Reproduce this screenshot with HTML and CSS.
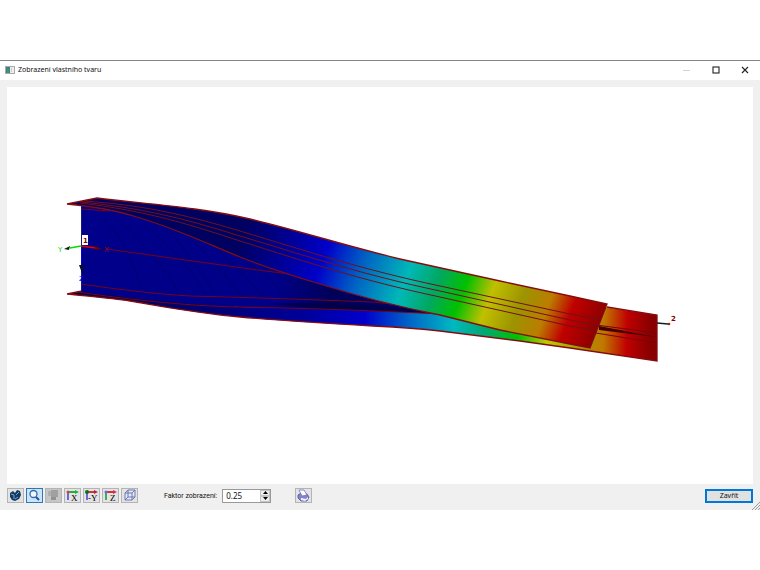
FILE: index.html
```html
<!DOCTYPE html>
<html lang="cs">
<head>
    <meta charset="UTF-8">
    <meta name="viewport" content="width=device-width, initial-scale=1.0">
    <title>Zobrazení vlastního tvaru</title>
    <link rel="stylesheet" href="styles.css">
</head>
<body>
    <div class="window">
        <header class="titlebar">
            <svg class="app-icon" viewBox="0 0 10 8">
                <rect x="0.5" y="0.5" width="9" height="7" fill="#eee" stroke="#aaa"/>
                <rect x="1" y="1" width="4" height="6" fill="#3f7f8c"/>
                <rect x="2" y="3" width="2" height="4" fill="#3c9a6a"/>
                <rect x="6" y="2" width="1" height="4" fill="#ccc"/>
            </svg>
            <h1>Zobrazení vlastního tvaru</h1>
            <div class="caption">
                <button type="button" aria-label="Minimalizovat" disabled><svg viewBox="0 0 8 8"><path d="M0 4.5h7" stroke="#d2d2d2"/></svg></button>
                <button type="button" aria-label="Maximalizovat"><svg viewBox="0 0 8 8"><rect x="1" y="1" width="6" height="6" fill="none" stroke="#222" stroke-width="1.1"/></svg></button>
                <button type="button" aria-label="Zavřít okno"><svg viewBox="0 0 8 8"><path d="M1 1l6 6M7 1L1 7" stroke="#222" stroke-width="1.1"/></svg></button>
            </div>
        </header>

        <main class="content">
            <div class="view">
                <svg class="model" viewBox="7 87 746 397" role="img" aria-label="Vlastní tvar nosníku">
                    <defs>
                        <linearGradient id="top" gradientUnits="userSpaceOnUse" x1="240" y1="237" x2="600" y2="376">
                            <stop offset="0" stop-color="#000060"/>
                            <stop offset="0.12" stop-color="#000094"/>
                            <stop offset="0.22" stop-color="#0000c8"/>
                            <stop offset="0.32" stop-color="#0060c4"/>
                            <stop offset="0.44" stop-color="#00b8b8"/>
                            <stop offset="0.52" stop-color="#00a860"/>
                            <stop offset="0.59" stop-color="#00c000"/>
                            <stop offset="0.66" stop-color="#c0c000"/>
                            <stop offset="0.74" stop-color="#9c9400"/>
                            <stop offset="0.81" stop-color="#bc7c00"/>
                            <stop offset="0.87" stop-color="#c00000"/>
                            <stop offset="0.96" stop-color="#880000"/>
                        </linearGradient>
                        <linearGradient id="bottom" gradientUnits="userSpaceOnUse" x1="67" y1="300" x2="657" y2="320">
                            <stop offset="0" stop-color="#000048"/>
                            <stop offset="0.22" stop-color="#000070"/>
                            <stop offset="0.4" stop-color="#000098"/>
                            <stop offset="0.505" stop-color="#0000cc"/>
                            <stop offset="0.57" stop-color="#0058c8"/>
                            <stop offset="0.655" stop-color="#00b8c0"/>
                            <stop offset="0.71" stop-color="#00a870"/>
                            <stop offset="0.765" stop-color="#00c000"/>
                            <stop offset="0.815" stop-color="#c0c800"/>
                            <stop offset="0.87" stop-color="#a89800"/>
                            <stop offset="0.91" stop-color="#c07800"/>
                            <stop offset="0.95" stop-color="#c00000"/>
                            <stop offset="0.99" stop-color="#880000"/>
                        </linearGradient>
                        <linearGradient id="web">
                            <stop offset="0" stop-color="#00008a"/>
                            <stop offset="0.55" stop-color="#000088"/>
                            <stop offset="0.7" stop-color="#000058"/>
                            <stop offset="1" stop-color="#000078"/>
                        </linearGradient>
                    </defs>

                    <!-- bottom flange and the far end -->
                    <path d="M67 294 L82 291 Q130 293 240 307 L420 309 L560 325 L605 307 L657 315 V361 L570 348 L520 341 C490 337 465 334 440 331 C415 328 395 327 373 326 C320 323 285 321 240 317 C195 313 160 306 130 301 C110 298 85 296 67 294Z" fill="url(#bottom)"/>
                    <!-- web -->
                    <path d="M81 205 L137 215 L183 231 L240 255 L320 283 L387 302 L440 314 C380 310 310 309 240 307 C180 304 120 296 81 292Z" fill="url(#web)"/>
                    <g fill="none" stroke="#000070">
                        <path d="M101 219 Q124 233 141 289"/>
                        <path d="M117 219 Q152 248 178 291"/>
                        <path d="M145 225 Q180 252 205 293"/>
                        <path d="M171 233 Q201 270 215 294"/>
                        <path d="M192 240 Q228 276 242 297"/>
                        <path d="M220 252 Q248 276 263 297"/>
                        <path d="M249 264 Q275 280 284 297"/>
                        <path d="M274 273 Q300 287 311 298"/>
                    </g>
                    <path d="M270 304 Q360 300 440 313 Q350 312 270 304Z" fill="#00004c"/>
                    <g fill="none" stroke="#7c0010">
                        <path d="M107 249 L250 269 L290 274"/>
                        <path d="M81 284 C115 289 155 294 190 296 C270 298 320 300 373 302 L400 305"/>
                        <path d="M77 292 C120 298 180 306 240 307 C300 308 385 311 440 314"/>
                        <path d="M81 209 L110 211"/>
                        <path d="M596 325 L657 333"/>
                        <path d="M596 333 L657 343"/>
                    </g>
                    <path d="M599 326 L656 337 L599 330Z" fill="#420000"/>

                    <!-- top flange -->
                    <path d="M67 204 L97 198 C145 204 200 207 250 219 C300 231 350 247 400 259 C435 267 465 273 500 281 L570 296 L607 304 L590 348 L570 344 L500 330 C480 325 460 320 440 315 C400 307 360 297 320 284 C290 275 265 267 240 257 C210 245 180 230 137 217 C115 210 90 206 67 204Z" fill="url(#top)"/>
                    <g fill="none" stroke="#70101c">
                        <path d="M84 201 C140 205 180 213 240 231 C310 252 360 269 440 286 L570 314 L601 320"/>
                        <path d="M82 202 C140 208 180 217 240 236 C310 257 360 274 440 291 L570 320 L599 326"/>
                        <path d="M80 203 C140 210 180 221 240 241 C310 263 360 280 440 297 L570 326 L597 331"/>
                    </g>
                    <g fill="none" stroke="#840c10" stroke-width="1.3">
                        <path d="M67 204 L97 198 C145 204 200 207 250 219 C300 231 350 247 400 259 C435 267 465 273 500 281 L570 296 L607 304 L590 348 L570 344 L500 330 C480 325 460 320 440 315 C400 307 360 297 320 284 C290 275 265 267 240 257 C210 245 180 230 137 217 C115 210 90 206 67 204Z"/>
                        <path d="M67 294 L82 291 M67 294 C85 296 110 298 130 301 C160 306 195 313 240 317 C285 321 320 323 373 326 C395 327 415 328 440 331 C465 334 490 337 520 341 L570 348 L657 361 V315 L607 307"/>
                    </g>

                    <!-- axes at node 1 -->
                    <path d="M81.500 206 V292" stroke="#181878"/>
                    <path d="M81.500 247 V268" stroke="#0000e0"/>
                    <path d="M79 265 h5 l-2 8z" fill="#061026"/>
                    <path d="M81 246 L70 248" stroke="#00e000" stroke-width="1.5"/>
                    <path d="M64 249 L70 246 L69 250Z" fill="#062c06"/>
                    <path d="M81 246 L96 248" stroke="#e80000" stroke-width="1.5"/>
                    <path d="M95 246 L102 249 L95 250Z" fill="#700000"/>
                    <rect x="82" y="235" width="6" height="10" fill="#fff"/>
                    <g class="marks">
                        <text x="83" y="243" fill="#800000">1</text>
                        <text x="58" y="252" class="axis" fill="#00e000">Y</text>
                        <text x="104" y="252" class="axis" fill="#b00010">X</text>
                        <text x="79" y="281" class="axis" fill="#0000e8">Z</text>
                        <text x="671" y="321" fill="#800000">2</text>
                    </g>
                    <path d="M657 323 L668 324" stroke="#102020" stroke-width="1.5"/>
                    <circle cx="669" cy="324" r="1.300" fill="#a02020"/>
                </svg>
            </div>

            <form class="toolbar">
                <div class="tools">
                    <button type="button" aria-label="Otočit">
                        <svg viewBox="0 0 15 13"><path d="M2 4l3-2 2 2 2-3 3 1 1 4-2 4-4 2-3-1-2-3z" fill="#163b60"/><path d="M3 5l3 1v4M8 6l3-3M7 10l3-2" fill="none" stroke="#68a8d8"/></svg>
                    </button>
                    <button type="button" class="active" aria-label="Lupa">
                        <svg viewBox="0 0 15 13"><circle cx="6.500" cy="5" r="3.500" fill="#eef8ff" stroke="#3866b0" stroke-width="1.300"/><path d="M9 8l3 3" stroke="#24509c" stroke-width="2"/></svg>
                    </button>
                    <button type="button" class="off" aria-label="Předchozí pohled" disabled>
                        <svg viewBox="0 0 15 13"><path d="M2 2h4v5H2z" fill="#b0b0b0"/><path d="M5 1h7v7H5z" fill="#a0a0a0"/><path d="M5 8h5v3H5z" fill="#929292"/></svg>
                    </button>
                    <button type="button" aria-label="Pohled X">
                        <svg viewBox="0 0 15 13"><path d="M3 3v8" stroke="#6868e0" stroke-width="2"/><path d="M3 3h8" stroke="#20b040" stroke-width="2"/><path d="M10 1l4 2-4 2z" fill="#20b040"/><circle cx="3" cy="3" r="1.500" fill="#d84040"/><text x="6" y="12">X</text></svg>
                    </button>
                    <button type="button" aria-label="Pohled -Y">
                        <svg viewBox="0 0 15 13"><path d="M3 3v8" stroke="#6868e0" stroke-width="2"/><path d="M3 3h8" stroke="#d83040" stroke-width="2"/><path d="M10 1l4 2-4 2z" fill="#b02838"/><circle cx="3" cy="3" r="2" fill="#087020"/><text x="4" y="12">-Y</text></svg>
                    </button>
                    <button type="button" aria-label="Pohled Z">
                        <svg viewBox="0 0 15 13"><path d="M3 3v8" stroke="#38b058" stroke-width="2"/><path d="M3 3h8" stroke="#d83040" stroke-width="2"/><path d="M10 1l4 2-4 2z" fill="#d83040"/><circle cx="3" cy="3" r="1.500" fill="#6868e0"/><text x="7" y="12">Z</text></svg>
                    </button>
                    <button type="button" aria-label="Axonometrie">
                        <svg viewBox="0 0 15 13"><path d="M3 4l3-3h7v7l-3 3H3zM3 4h7v7M10 4l3-3M6 1v7h7M6 8l-3 3" fill="#e4e8fa" stroke="#6070a8" stroke-width="0.900"/></svg>
                    </button>
                </div>
                <label for="faktor">Faktor zobrazení:</label>
                <div class="spin">
                    <input type="text" inputmode="decimal" id="faktor" name="faktor" value="0.25">
                    <div class="arrows">
                        <button type="button" aria-label="Zvýšit"><svg viewBox="0 0 5 3"><path d="M2.500 0L5 3H0z"/></svg></button>
                        <button type="button" aria-label="Snížit"><svg viewBox="0 0 5 3"><path d="M0 0h5L2.500 3z"/></svg></button>
                    </div>
                </div>
                <button type="button" class="print" aria-label="Tisk">
                    <svg viewBox="0 0 15 13"><path d="M2 6l3-2 6 1 2 3-2 4H5L2 9z" fill="#8484cc" stroke="#5050a0" stroke-width="0.800"/><path d="M3 1l5 0 3 5-5 1z" fill="#fff" stroke="#7474b8" stroke-width="0.800"/><path d="M5 9l5 1 2-2v2l-3 2-4-1z" fill="#f4f4ff"/></svg>
                </button>
                <button type="button" class="close">Zavřít</button>
            </form>
            <svg class="grip" viewBox="0 0 8 8"><path d="M0 8l8-8M3 8l5-5M6 8l2-2" stroke="#999"/></svg>
        </main>
    </div>
</body>
</html>
```
FILE: styles.css
```css
*{
    box-sizing: border-box;
}

body{
    margin: 0;
    background-color: white;
    font-family: "Noto Sans", sans-serif;
    font-size: 7px;
    color: #111;
}

.window{
    min-height: 100vh;
    padding: 60px 0;
    display: flex;
    flex-direction: column;
}

button{
    padding: 0;
    display: flex;
    justify-content: center;
    align-items: center;
    font: inherit;
    color: inherit;
}

.titlebar{
    height: 20px;
    border-top: 1px solid #858585;
    padding: 0 7px 1px 5px;
    display: flex;
    align-items: center;
    gap: 3px;
}

.app-icon{
    width: 10px;
    height: 8px;
}

h1{
    flex: 1;
    margin: 0;
    font-size: 7px;
    line-height: 10px;
    font-weight: normal;
}

.caption{
    display: flex;
    gap: 13px;
}

.caption button{
    width: 16px;
    height: 16px;
    border: none;
    background: none;
}

.caption svg{
    width: 8px;
    height: 8px;
}

.content{
    position: relative;
    flex: 1;
    display: flex;
    flex-direction: column;
    padding: 7px 7px 0;
    background-color: #f0f0f0;
}

.view{
    flex: 1;
    display: flex;
    background-color: white;
}

.model{
    width: 100%;
}

.marks text{
    font-family: "DejaVu Sans", sans-serif;
    font-size: 7px;
    font-weight: bold;
}

.marks .axis{
    font-weight: normal;
}

.toolbar{
    height: 26px;
    padding-bottom: 3px;
    display: flex;
    align-items: center;
}

.tools{
    display: flex;
    gap: 2px;
}

.tools button, .print{
    width: 17px;
    height: 15px;
    border: 1px solid #b4b4b4;
    background-color: #e3e3e3;
}

.tools svg, .print svg{
    width: 15px;
    height: 13px;
    flex: none;
}

.tools text{
    font-family: "Liberation Serif", serif;
    font-size: 9px;
}

.tools .active{
    border-color: #2f78b8;
    background-color: #cce4f7;
}

.tools .off{
    background-color: #c6c6c6;
}

label{
    margin: 0 5px 0 26px;
    font-family: Roboto, sans-serif;
}

.spin{
    width: 49px;
    height: 14px;
    display: flex;
    border: 1px solid #999;
    background-color: white;
}

.spin input{
    width: 37px;
    border: none;
    padding: 0 3px;
    background: none;
    font: inherit;
    font-size: 8px;
    color: inherit;
}

.arrows{
    flex: 1;
    display: flex;
    flex-direction: column;
}

.arrows button{
    flex: 1;
    border: 1px solid #c4c4c4;
    background-color: #eee;
}

.arrows svg{
    width: 5px;
    height: 3px;
    flex: none;
}

.print{
    margin-left: 24px;
}

.close{
    width: 48px;
    height: 14px;
    margin-left: auto;
    border: 2px solid #0078d7;
    background-color: #e1e1e1;
}

.grip{
    position: absolute;
    right: 0;
    bottom: 0;
    width: 8px;
    height: 8px;
}
```
